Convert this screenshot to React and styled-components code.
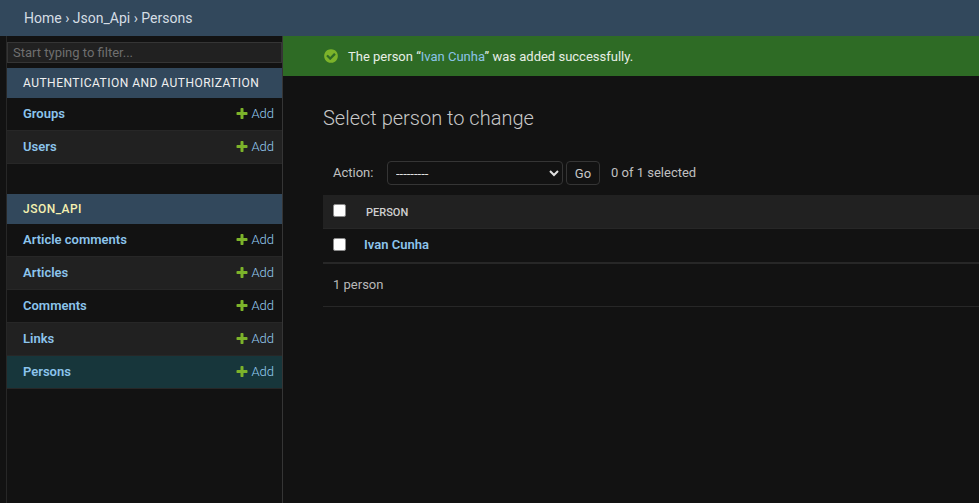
import React from "react";
import styled, { createGlobalStyle } from "styled-components";

const GlobalStyle = createGlobalStyle`
  html, body {
    margin: 0;
    height: 100%;
    background: #121212;
    color-scheme: dark;
  }
  body {
    font-family: Roboto, "Liberation Sans", sans-serif;
    font-size: 14px;
    color: #e0e0e0;
    overflow: hidden;
  }
  a {
    color: #8cc4ec;
    text-decoration: none;
  }
`;

const Page = styled.div`
  display: flex;
  flex-direction: column;
  height: 503px;
`;

const Breadcrumbs = styled.div`
  height: 36px;
  flex: none;
  display: flex;
  align-items: center;
  padding: 0 24px;
  background: #32485c;
  color: #d5dde4;
  font-size: 14px;
  font-weight: 400;
`;

const Main = styled.div`
  display: flex;
  flex: 1;
  min-height: 0;
`;

const Sidebar = styled.nav`
  width: 275px;
  margin-left: 6px;
  flex: none;
  border-left: 1px solid #272727;
  border-right: 1px solid #353535;
  padding-top: 6px;
`;

const FilterInput = styled.input`
  display: block;
  box-sizing: border-box;
  width: 100%;
  height: 21px;
  margin: 0 0 5px;
  padding: 0 5px;
  background: #212121;
  border: 1px solid #353535;
  color: #e0e0e0;
  font-family: inherit;
  font-size: 13px;
  outline: none;
  &::placeholder {
    color: #6f6f6f;
    opacity: 1;
  }
`;

const Module = styled.section`
  margin-bottom: 30px;
`;

const Caption = styled.div`
  height: 30px;
  box-sizing: border-box;
  display: flex;
  align-items: center;
  padding: 0 0 1px 16px;
  background: #32485c;
  color: ${(props) => (props.current ? "#f5f0b0" : "#f0f0f0")};
  font-size: 12px;
  font-weight: ${(props) => (props.current ? 500 : 400)};
  letter-spacing: 0.48px;
  text-transform: uppercase;
`;

const ModelRow = styled.div`
  height: 33px;
  box-sizing: border-box;
  display: flex;
  align-items: center;
  justify-content: space-between;
  padding: 0 8px 2px 16px;
  border-bottom: 1px solid #272727;
  background: ${(props) => (props.selected ? "#17363b" : props.odd ? "#212121" : "#121212")};
  font-size: 13px;
`;

const ModelLink = styled.a`
  font-weight: 600;
`;

const AddLink = styled.a`
  display: flex;
  align-items: center;
  gap: 2px;
  font-weight: 300;
  color: #96ccf2;

  svg {
    margin-top: 1px;
  }
`;

const Content = styled.main`
  flex: 1;
  min-width: 0;
`;

const Message = styled.div`
  height: 40px;
  display: flex;
  align-items: center;
  gap: 9px;
  padding-left: 40px;
  background: #2e6b25;
  color: #e8efe6;
  font-size: 13px;
  font-weight: 400;
`;

const MessageLink = styled.a`
  color: #8cc4e8;
`;

const ContentBody = styled.div`
  padding: 0 0 0 40px;
`;

const Title = styled.h1`
  margin: 29px 0 0;
  height: 27px;
  font-size: 20px;
  line-height: 27px;
  font-weight: 300;
  color: #c8c8c8;
`;

const Actions = styled.div`
  display: flex;
  align-items: center;
  height: 24px;
  margin-top: 29px;
  padding-left: 10px;
  font-size: 13px;
  color: #c0c0c0;
`;

const ActionLabel = styled.label`
  width: 54px;
  flex: none;
  margin-bottom: 2px;
`;

const ActionSelect = styled.select`
  box-sizing: border-box;
  width: 176px;
  height: 24px;
  padding: 0 4px;
  background: #121212;
  border: 1px solid #353535;
  border-radius: 4px;
  color: #e0e0e0;
  font-family: inherit;
  font-size: 13px;
`;

const GoButton = styled.button`
  box-sizing: border-box;
  width: 34px;
  height: 24px;
  margin-left: 3px;
  padding: 0;
  background: #121212;
  border: 1px solid #353535;
  border-radius: 4px;
  color: #c8c8c8;
  font-family: inherit;
  font-size: 13px;
`;

const Counter = styled.span`
  margin-left: 11px;
  margin-bottom: 2px;
`;

const ResultsHeader = styled.div`
  display: flex;
  align-items: center;
  height: 34px;
  margin-top: 10px;
  padding: 0 0 2px 10px;
  background: #212121;
  border-bottom: 1px solid #272727;
  box-sizing: border-box;
`;

const ResultRow = styled.div`
  display: flex;
  align-items: center;
  height: 35px;
  padding: 0 0 3px 10px;
  box-sizing: border-box;
  border-bottom: 2px solid #272727;
`;

const Check = styled.input.attrs({ type: "checkbox" })`
  width: 13px;
  height: 13px;
  margin: 0;
  flex: none;
  appearance: none;
  background: #fff;
  border: 1px solid #8a8a8a;
  border-radius: 2px;
  box-sizing: border-box;
`;

const ColumnTitle = styled.span`
  margin: 4px 0 0 20px;
  font-size: 11px;
  font-weight: 500;
  color: #d0d0d0;
  text-transform: uppercase;
`;

const PersonLink = styled.a`
  margin-left: 18px;
  font-size: 13px;
  font-weight: 600;
`;

const Paginator = styled.div`
  height: 43px;
  box-sizing: border-box;
  display: flex;
  align-items: center;
  padding: 0 0 2px 10px;
  border-bottom: 1px solid #272727;
  font-size: 13px;
  color: #b8b8b8;
`;

const PlusIcon = () => (
  <svg width="14" height="14" viewBox="0 0 1792 1792">
    <path
      fill="#7cb32a"
      d="M1600 736v192q0 40-28 68t-68 28h-416v416q0 40-28 68t-68 28h-192q-40 0-68-28t-28-68v-416h-416q-40 0-68-28t-28-68v-192q0-40 28-68t68-28h416v-416q0-40 28-68t68-28h192q40 0 68 28t28 68v416h416q40 0 68 28t28 68z"
    />
  </svg>
);

const SuccessIcon = () => (
  <svg width="16" height="16" viewBox="0 0 1792 1792">
    <path
      fill="#7cb32a"
      d="M1412 734q0-28-18-46l-91-90q-19-19-45-19t-45 19l-408 407-226-226q-19-19-45-19t-45 19l-91 90q-18 18-18 46 0 27 18 45l362 362q19 19 45 19 27 0 46-19l543-543q18-18 18-45zm252 162q0 209-103 385.500t-279.500 279.500-385.500 103-385.500-103-279.500-279.500-103-385.500 103-385.500 279.500-279.500 385.500-103 385.500 103 279.500 279.500 103 385.500z"
    />
  </svg>
);

const modules = [
  {
    name: "Authentication and Authorization",
    models: ["Groups", "Users"],
  },
  {
    name: "Json_Api",
    current: true,
    models: ["Article comments", "Articles", "Comments", "Links", "Persons"],
  },
];

const App = () => {
  return (
    <Page>
      <GlobalStyle />
      <Breadcrumbs>Home › Json_Api › Persons</Breadcrumbs>
      <Main>
        <Sidebar>
          <FilterInput placeholder="Start typing to filter..." />
          {modules.map((module) => (
            <Module key={module.name}>
              <Caption current={module.current}>{module.name}</Caption>
              {module.models.map((model, i) => (
                <ModelRow key={model} odd={i % 2 === 1} selected={model === "Persons"}>
                  <ModelLink href="#">{model}</ModelLink>
                  <AddLink href="#">
                    <PlusIcon />
                    Add
                  </AddLink>
                </ModelRow>
              ))}
            </Module>
          ))}
        </Sidebar>
        <Content>
          <Message>
            <SuccessIcon />
            <span>
              The person “<MessageLink href="#">Ivan Cunha</MessageLink>” was added successfully.
            </span>
          </Message>
          <ContentBody>
            <Title>Select person to change</Title>
            <Actions>
              <ActionLabel>Action:</ActionLabel>
              <ActionSelect defaultValue="">
                <option value="">---------</option>
              </ActionSelect>
              <GoButton>Go</GoButton>
              <Counter>0 of 1 selected</Counter>
            </Actions>
            <ResultsHeader>
              <Check />
              <ColumnTitle>Person</ColumnTitle>
            </ResultsHeader>
            <ResultRow>
              <Check />
              <PersonLink href="#">Ivan Cunha</PersonLink>
            </ResultRow>
            <Paginator>1 person</Paginator>
          </ContentBody>
        </Content>
      </Main>
    </Page>
  );
};

export default App;
